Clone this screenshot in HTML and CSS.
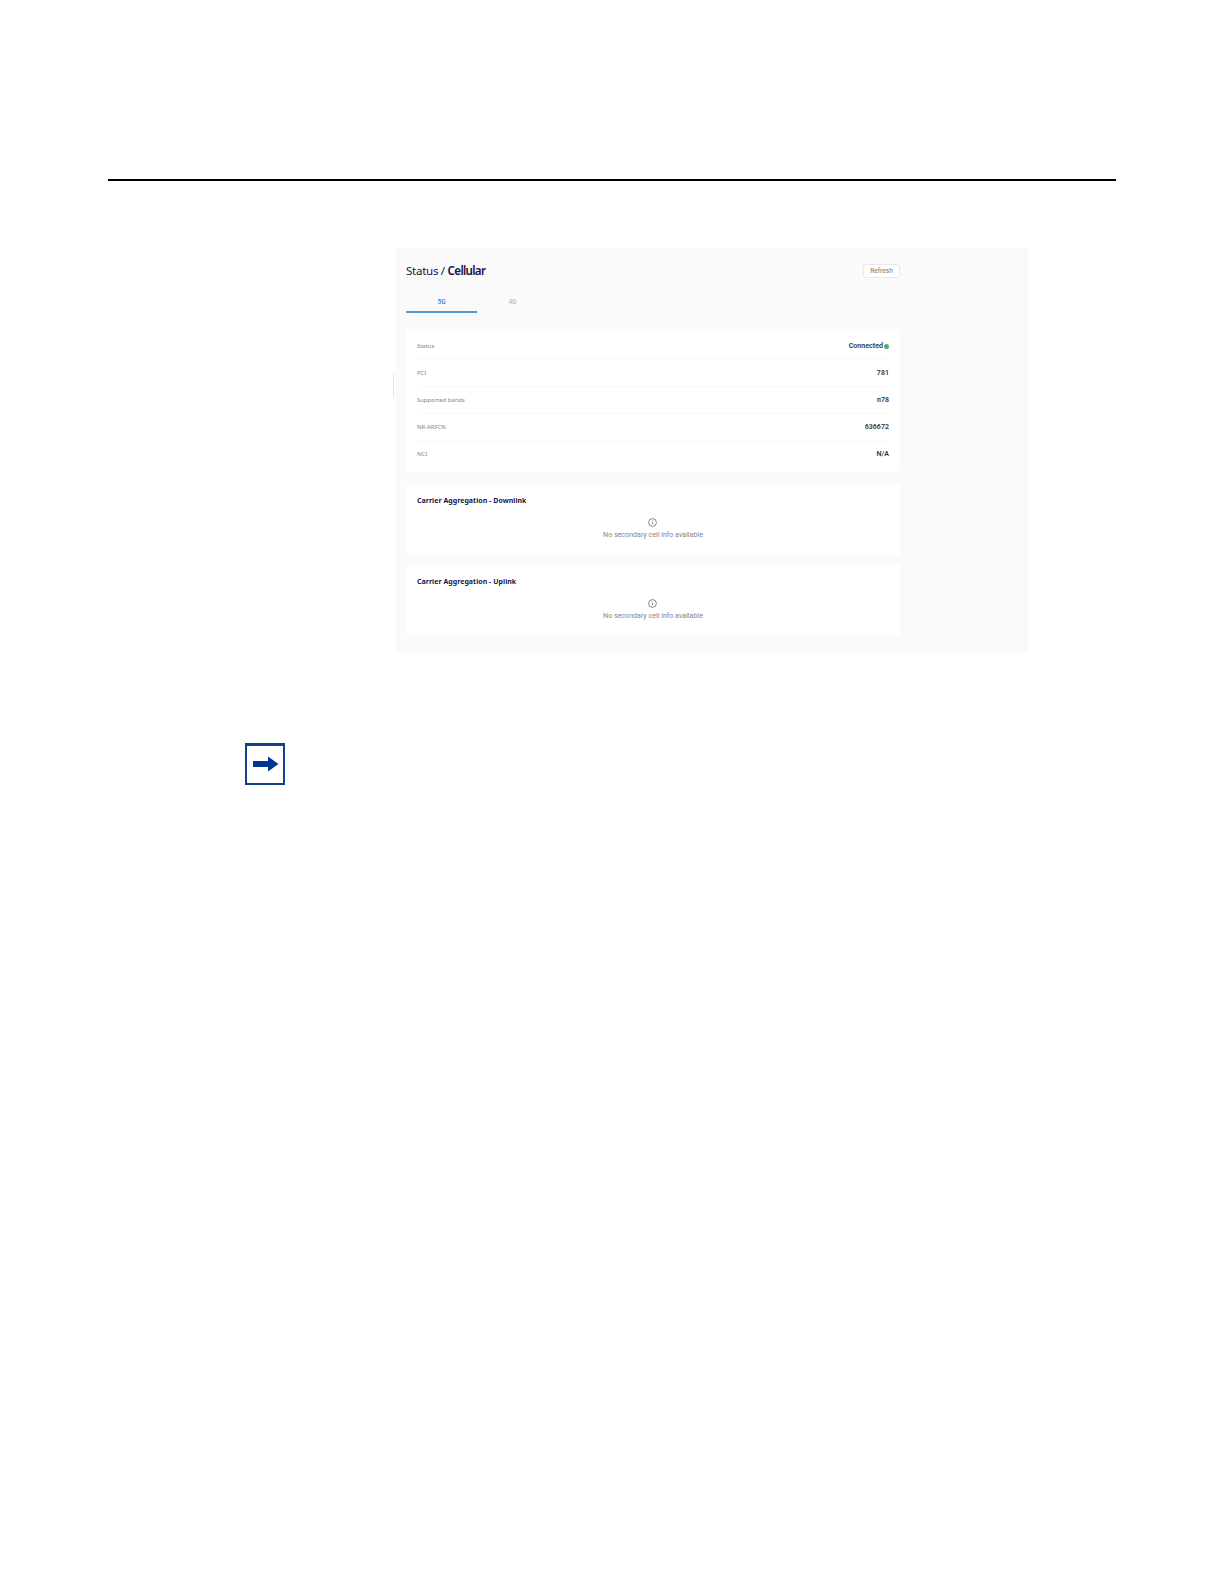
FILE: index.html
```
<!DOCTYPE html>
<html lang="en">
<head>
    <meta charset="UTF-8">
    <meta name="viewport" content="width=device-width, initial-scale=1.0">
    <title>Status / Cellular</title>
    <link rel="stylesheet" href="styles.css">
</head>
<body>
    <div class="page">
        <hr class="rule">

        <div class="panel">
            <span class="handle"></span>
            <div class="header">
                <h1 class="title">Status / <b>Cellular</b></h1>
                <button class="refresh">Refresh</button>
            </div>
            <div class="tabs">
                <div class="tab active">5G</div>
                <div class="tab">4G</div>
            </div>

            <div class="card list">
                <div class="row"><span>Status</span><span class="value">Connected<i class="dot"></i></span></div>
                <div class="row"><span>PCI</span><span class="value">781</span></div>
                <div class="row"><span>Supported bands</span><span class="value">n78</span></div>
                <div class="row"><span>NR-ARFCN</span><span class="value">636672</span></div>
                <div class="row"><span>NCI</span><span class="value">N/A</span></div>
            </div>

            <div class="card cells">
                <h2>Carrier Aggregation - Downlink</h2>
                <div class="empty">
                    <svg width="9" height="9" viewBox="0 0 9 9">
                        <circle cx="4.5" cy="4.5" r="3.9" fill="none" stroke="#777" stroke-width="0.9"/>
                        <path d="M4.5 2.5v0.8M4.5 4v2.2" stroke="#777" stroke-width="0.9"/>
                    </svg>
                    <p>No secondary cell info available</p>
                </div>
            </div>

            <div class="card cells">
                <h2>Carrier Aggregation - Uplink</h2>
                <div class="empty">
                    <svg width="9" height="9" viewBox="0 0 9 9">
                        <circle cx="4.5" cy="4.5" r="3.9" fill="none" stroke="#777" stroke-width="0.9"/>
                        <path d="M4.5 2.5v0.8M4.5 4v2.2" stroke="#777" stroke-width="0.9"/>
                    </svg>
                    <p>No secondary cell info available</p>
                </div>
            </div>
        </div>

        <div class="note">
            <svg width="26" height="16" viewBox="0 0 26 16">
                <path d="M0 5h15V0.5l10.5 7.5-10.5 7.5V11H0z" fill="#003594"/>
            </svg>
        </div>
    </div>
</body>
</html>
```

FILE: styles.css
```
* {
    box-sizing: border-box;
}
body {
    margin: 0;
    background-color: #fff;
    font-family: Roboto, "Liberation Sans", sans-serif;
}
.page {
    height: 1584px;
    padding: 179px 108px 0;
}
.rule {
    height: 2px;
    margin: 0;
    border: 0;
    background-color: #000;
}
.panel {
    position: relative;
    width: 632px;
    height: 404px;
    margin: 67px 0 0 288px;
    padding: 15px 128px 0 10px;
    background-color: #fafafa;
}
/* edge of the collapsed side menu */
.handle {
    position: absolute;
    left: -3px;
    top: 124px;
    width: 3px;
    height: 26px;
    border-left: 1px solid #e4e4e4;
    border-radius: 2px 0 0 2px;
}
.header {
    display: flex;
    justify-content: space-between;
    align-items: center;
    height: 16px;
}
.title {
    margin: 0;
    color: #17123f;
    font-family: "Noto Sans", sans-serif;
    font-size: 11.6px;
    font-weight: 400;
    line-height: 16px;
    letter-spacing: -0.3px;
}
.title b {
    font-weight: 600;
    letter-spacing: -0.7px;
}
.refresh {
    width: 37px;
    height: 14px;
    padding: 0;
    border: 1px solid #e9e9e9;
    border-radius: 3px;
    background-color: #fff;
    color: #777;
    font-family: inherit;
    font-size: 6.6px;
    line-height: 12px;
}
.tabs {
    display: flex;
    height: 34px;
    padding-top: 16px;
}
.tab {
    width: 71px;
    height: 18px;
    color: #aaa;
    font-size: 6.4px;
    line-height: 14px;
    text-align: center;
}
.tab.active {
    border-bottom: 2px solid #5199d6;
    color: #2f7fd6;
    font-weight: 500;
}
.card {
    width: 494px;
    padding: 0 11px;
    border-radius: 3px;
    background-color: #fff;
}
.list {
    height: 143px;
    margin-top: 16px;
    padding-top: 4px;
}
.row {
    display: flex;
    justify-content: space-between;
    align-items: center;
    height: 27px;
    border-bottom: 1px solid #f9f9f9;
    color: #858585;
    font-family: "Noto Sans", sans-serif;
    font-size: 5.9px;
}
.row:last-child {
    height: 26px;
    border-bottom: 0;
}
.value {
    display: flex;
    align-items: center;
    color: #333;
    font-family: Roboto, sans-serif;
    font-size: 7px;
    font-weight: 600;
    letter-spacing: 0.05px;
}
.dot {
    width: 5px;
    height: 5px;
    margin-left: 1px;
    border-radius: 50%;
    background-color: #57a773;
}
.cells {
    height: 71px;
    margin-top: 12px;
    padding-top: 11px;
}
.cells + .cells {
    margin-top: 10px;
}
.cells h2 {
    margin: 0;
    color: #1d1744;
    font-family: "Noto Sans", sans-serif;
    font-size: 7px;
    font-weight: 700;
    line-height: 12px;
    letter-spacing: 0.03px;
}
.empty {
    display: flex;
    flex-direction: column;
    align-items: center;
    padding-top: 11px;
    color: #858585;
    font-size: 7.1px;
}
.empty svg {
    display: block;
    margin-right: 1px;
}
.empty p {
    margin: 3px 0 0;
    line-height: 10px;
}
.note {
    display: flex;
    align-items: center;
    justify-content: center;
    width: 40px;
    height: 42px;
    margin: 91px 0 0 137px;
    padding: 0 0 1px 1px;
    border: 2px solid #12428f;
    border-top-width: 3px;
}
```
